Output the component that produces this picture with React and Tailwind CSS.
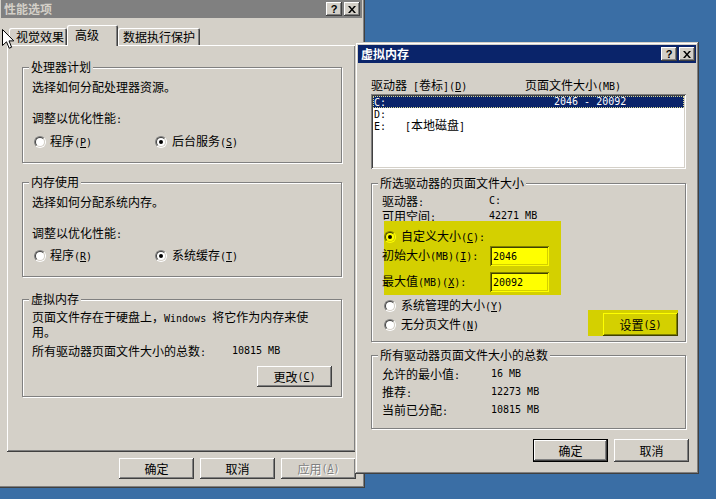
import React from 'react';

// classic 3D edges
const WIN = 'shadow-[inset_-1px_-1px_#404040,inset_1px_1px_#d4d0c8,inset_-2px_-2px_#808080,inset_2px_2px_#ffffff]';
const RAISED = 'shadow-[inset_-1px_-1px_#404040,inset_1px_1px_#ffffff,inset_-2px_-2px_#808080]';
const SUNKEN = 'shadow-[inset_1px_1px_#808080,inset_-1px_-1px_#ffffff,inset_2px_2px_#404040,inset_-2px_-2px_#d4d0c8]';
const TAB = 'shadow-[inset_1px_1px_#ffffff,inset_-1px_0_#404040,inset_-2px_0_#808080]';

function A({ children }) {
  return <span className="font-['DejaVu_Sans_Mono',monospace] text-[10px]">{children}</span>;
}

function Radio({ checked, yellow }) {
  return (
    <span
      className={
        yellow
          ? 'relative block w-[12px] h-[12px] shrink-0 rounded-full border border-t-[#808000] border-l-[#808000] border-b-[#ffff00] border-r-[#ffff00]'
          : 'relative block w-[12px] h-[12px] shrink-0 rounded-full border border-t-[#808080] border-l-[#808080] border-b-white border-r-white'
      }
    >
      <span
        className={
          yellow
            ? 'absolute inset-0 rounded-full border border-t-[#404000] border-l-[#404000] border-b-[#d4d000] border-r-[#d4d000] bg-[#ffff00] flex items-center justify-center'
            : 'absolute inset-0 rounded-full border border-t-[#404040] border-l-[#404040] border-b-[#d4d0c8] border-r-[#d4d0c8] bg-white flex items-center justify-center'
        }
      >
        {checked && <span className="block w-[4px] h-[4px] rounded-full bg-black" />}
      </span>
    </span>
  );
}

function Caps() {
  return (
    <div className="ml-auto flex gap-[2px]">
      <div className={'w-[16px] h-[14px] bg-[#d4d0c8] flex items-center justify-center ' + RAISED}>
        <span className="font-['Liberation_Sans',sans-serif] font-bold text-[11px] leading-[11px] text-black">?</span>
      </div>
      <div className={'w-[16px] h-[14px] bg-[#d4d0c8] flex items-center justify-center ' + RAISED}>
        <svg width="8" height="7" viewBox="0 0 8 7">
          <path d="M0 0h2l2 2.5 2-2.5h2L5 3.5 8 7H6L4 4.5 2 7H0l3-3.5z" fill="#000" />
        </svg>
      </div>
    </div>
  );
}

function Group({ title, className, children }) {
  return (
    <div className={'relative border border-[#808080] shadow-[inset_1px_1px_#ffffff,1px_1px_#ffffff] ' + className}>
      <span className="absolute left-[6px] top-[-7px] bg-[#d4d0c8] px-[2px] leading-[12px] whitespace-nowrap">{title}</span>
      {children}
    </div>
  );
}

function Button({ children, className = '', def, disabled }) {
  return (
    <div
      className={
        'w-[75px] flex items-center justify-center bg-[#d4d0c8] ' +
        (def
          ? 'shadow-[inset_0_0_0_1px_#000000,inset_-2px_-2px_#404040,inset_2px_2px_#ffffff,inset_-3px_-3px_#808080] '
          : RAISED + ' ') +
        (disabled ? 'text-[#808080] [text-shadow:1px_1px_0_#ffffff] ' : '') +
        className
      }
    >
      {children}
    </div>
  );
}

function Field({ children }) {
  return (
    <div className="w-[59px] h-[20px] bg-[#ffff00] pl-[3px] pt-[3px] shadow-[inset_1px_1px_#808000,inset_-1px_-1px_#ffff00,inset_2px_2px_#404000,inset_-2px_-2px_#d4d000]">
      <A>{children}</A>
    </div>
  );
}

function Cursor() {
  return (
    <svg className="absolute left-[2px] top-[29px] z-30" width="13" height="21" viewBox="0 0 13 21">
      <path d="M0.5 0.5V16.5L4.5 12.8L7.2 19.2L9.6 18.2L7 11.9H11.8Z" fill="#fff" stroke="#000" strokeWidth="1" />
    </svg>
  );
}

export default function App() {
  return (
    <div className="relative w-[716px] h-[499px] overflow-hidden bg-[#3a6ea5] font-['Noto_Sans_CJK_SC',sans-serif] text-[12px] leading-[12px] text-black">
      {/* 性能选项 */}
      <div className={'absolute left-[-2px] top-[-3px] w-[367px] h-[491px] bg-[#d4d0c8] p-[3px] flex flex-col ' + WIN}>
        <div className="h-[18px] shrink-0 bg-[#808080] flex items-center pl-[3px] pr-[2px]">
          <span className="font-bold text-[#d4d0c8]">性能选项</span>
          <Caps />
        </div>

        <div className="relative z-10 mt-[7px] ml-[8px] h-[20px] flex items-end">
          <div className={'w-[58px] h-[17px] pl-[7px] pt-[3px] rounded-t-[2px] ' + TAB}>视觉效果</div>
          <div className={'w-[51px] h-[21px] -mb-[1px] pl-[8px] pt-[4px] bg-[#d4d0c8] rounded-t-[2px] ' + TAB}>高级</div>
          <div className={'w-[82px] h-[17px] pl-[5px] pt-[3px] rounded-t-[2px] ' + TAB}>数据执行保护</div>
        </div>

        <div className={'ml-[6px] w-[349px] h-[407px] pt-[22px] pl-[15px] flex flex-col ' + RAISED}>
          <Group title="处理器计划" className="w-[320px] h-[96px]">
            <div className="pt-[13px] pl-[9px] flex flex-col">
              <div className="h-[12px]">选择如何分配处理器资源。</div>
              <div className="h-[12px] mt-[19px]">调整以优化性能<A>:</A></div>
              <div className="h-[12px] mt-[12px] pl-[2px] flex items-center">
                <div className="w-[121px] flex items-center gap-[4px]">
                  <Radio />
                  <span>程序<A>(<u>P</u>)</A></span>
                </div>
                <div className="flex items-center gap-[5px]">
                  <Radio checked />
                  <span>后台服务<A>(<u>S</u>)</A></span>
                </div>
              </div>
            </div>
          </Group>

          <Group title="内存使用" className="w-[320px] h-[95px] mt-[19px]">
            <div className="pt-[13px] pl-[9px] flex flex-col">
              <div className="h-[12px]">选择如何分配系统内存。</div>
              <div className="h-[12px] mt-[19px]">调整以优化性能<A>:</A></div>
              <div className="h-[12px] mt-[11px] pl-[2px] flex items-center">
                <div className="w-[121px] flex items-center gap-[4px]">
                  <Radio />
                  <span>程序<A>(<u>R</u>)</A></span>
                </div>
                <div className="flex items-center gap-[5px]">
                  <Radio checked />
                  <span>系统缓存<A>(<u>T</u>)</A></span>
                </div>
              </div>
            </div>
          </Group>

          <Group title="虚拟内存" className="w-[320px] h-[98px] mt-[22px]">
            <div className="pt-[10px] pl-[9px] flex flex-col">
              <div className="whitespace-nowrap leading-[13px]">
                页面文件存在于硬盘上，<A>Windows </A>将它作为内存来使
                <br />
                用。
              </div>
              <div className="h-[12px] mt-[7px] flex">
                <span className="w-[200px]">所有驱动器页面文件大小的总数<A>:</A></span>
                <A>10815 MB</A>
              </div>
              <div className="mt-[9px] flex justify-end pr-[9px]">
                <Button className="h-[21px]">更改<A>(<u>C</u>)</A></Button>
              </div>
            </div>
          </Group>
        </div>

        <div className="ml-[6px] w-[349px] mt-[6px] flex justify-end gap-[6px]">
          <Button className="h-[21px]">确定</Button>
          <Button className="h-[21px]">取消</Button>
          <Button className="h-[21px]" disabled>应用<A>(<u>A</u>)</A></Button>
        </div>
      </div>

      <Cursor />

      {/* 虚拟内存 */}
      <div className={'absolute z-20 left-[355px] top-[42px] w-[344px] h-[432px] bg-[#d4d0c8] p-[3px] flex flex-col ' + WIN}>
        <div className="h-[18px] shrink-0 bg-[#0a246a] flex items-center pl-[3px] pr-[1px]">
          <span className="font-bold text-white">虚拟内存</span>
          <Caps />
        </div>

        <div className="flex flex-col items-start pl-[13px]">
          <div className="mt-[16px] h-[12px] flex whitespace-nowrap">
            <span className="w-[154px]">驱动器<A> [</A>卷标<A>](<u>D</u>)</A></span>
            <span>页面文件大小<A>(MB)</A></span>
          </div>

          <div className={'mt-[3px] w-[315px] h-[75px] bg-white p-[2px] ' + SUNKEN}>
            <div className="h-[12px] bg-[#0a246a] text-white flex items-center pl-[1px] outline-dotted outline-1 outline-[#d8d890] -outline-offset-1">
              <span className="w-[180px]"><A>C:</A></span>
              <A>2046 - 20092</A>
            </div>
            <div className="h-[12px] flex items-center pl-[1px]">
              <span className="w-[31px]"><A>D:</A></span>
            </div>
            <div className="h-[12px] flex items-center pl-[1px]">
              <span className="w-[31px]"><A>E:</A></span>
              <span><A>[</A>本地磁盘<A>]</A></span>
            </div>
          </div>

          <Group title="所选驱动器的页面文件大小" className="mt-[14px] w-[315px] h-[159px]">
            <div className="pt-[11px] pl-[10px] flex flex-col items-start">
              <div className="h-[12px] flex">
                <span className="w-[107px]">驱动器<A>:</A></span>
                <A>C:</A>
              </div>
              <div className="h-[12px] mt-[3px] flex">
                <span className="w-[107px]">可用空间<A>:</A></span>
                <A>42271 MB</A>
              </div>
              <div className="-mt-[1px] ml-[2px] w-[177px] h-[74px] bg-[#d4d000] pt-[10px] flex flex-col">
                <div className="h-[12px] flex items-center gap-[5px]">
                  <Radio checked yellow />
                  <span>自定义大小<A>(<u>C</u>):</A></span>
                </div>
                <div className="mt-[3px] h-[20px] flex items-center">
                  <span className="-ml-[2px] w-[108px]">初始大小<A>(MB)(<u>I</u>):</A></span>
                  <Field>2046</Field>
                </div>
                <div className="mt-[6px] h-[20px] flex items-center">
                  <span className="-ml-[2px] w-[108px]">最大值<A>(MB)(<u>X</u>):</A></span>
                  <Field>20092</Field>
                </div>
              </div>
              <div className="flex">
                <div className="w-[206px] pl-[2px] pt-[5px] flex flex-col">
                  <div className="h-[12px] flex items-center gap-[5px]">
                    <Radio />
                    <span>系统管理的大小<A>(<u>Y</u>)</A></span>
                  </div>
                  <div className="h-[12px] mt-[7px] flex items-center gap-[5px]">
                    <Radio />
                    <span>无分页文件<A>(<u>N</u>)</A></span>
                  </div>
                </div>
                <div className="mt-[15px] w-[90px] h-[26px] bg-[#d4d000] pl-[15px] pt-[3px]">
                  <div className="w-[75px] h-[23px] flex items-center justify-center bg-[#d4d000] shadow-[inset_-1px_-1px_#404000,inset_1px_1px_#ffff00,inset_-2px_-2px_#808000]">
                    设置<A>(<u>S</u>)</A>
                  </div>
                </div>
              </div>
            </div>
          </Group>

          <Group title="所有驱动器页面文件大小的总数" className="mt-[13px] w-[315px] h-[74px]">
            <div className="pt-[12px] pl-[10px] flex flex-col gap-[6px]">
              <div className="h-[12px] flex">
                <span className="w-[109px]">允许的最小值<A>:</A></span>
                <A>16 MB</A>
              </div>
              <div className="h-[12px] flex">
                <span className="w-[109px]">推荐<A>:</A></span>
                <A>12273 MB</A>
              </div>
              <div className="h-[12px] flex">
                <span className="w-[109px]">当前已分配<A>:</A></span>
                <A>10815 MB</A>
              </div>
            </div>
          </Group>

          <div className="self-stretch mt-[10px] flex justify-end gap-[6px] pr-[7px]">
            <Button className="h-[23px]" def>确定</Button>
            <Button className="h-[23px]">取消</Button>
          </div>
        </div>
      </div>
    </div>
  );
}
